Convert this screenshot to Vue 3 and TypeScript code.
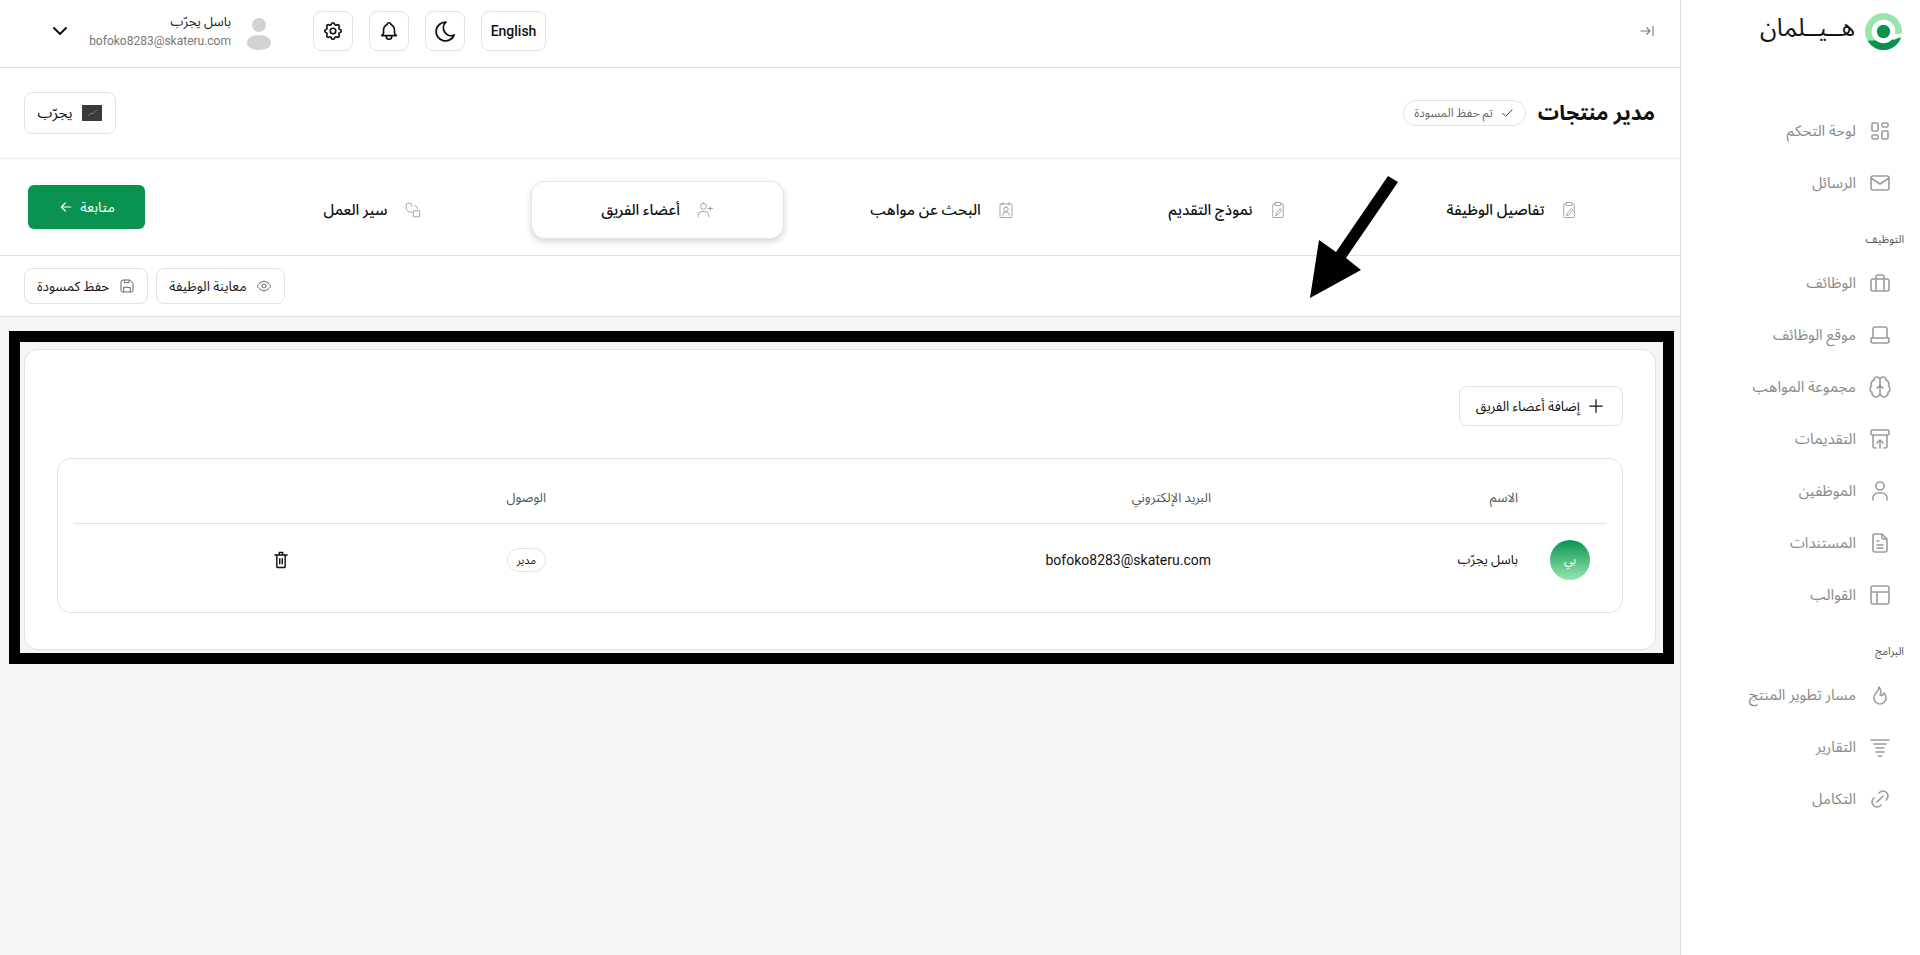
<script setup lang="ts">
// Team members step of the job wizard, with the review annotation on top.

interface NavItem {
  label: string
  icon: string
}

interface NavGroup {
  title?: string
  items: NavItem[]
}

interface Step {
  label: string
  icon: string
  active?: boolean
}

const navGroups: NavGroup[] = [
  {
    items: [
      { label: 'لوحة التحكم', icon: 'dashboard' },
      { label: 'الرسائل', icon: 'mail' },
    ],
  },
  {
    title: 'التوظيف',
    items: [
      { label: 'الوظائف', icon: 'briefcase' },
      { label: 'موقع الوظائف', icon: 'laptop' },
      { label: 'مجموعة المواهب', icon: 'brain' },
      { label: 'التقديمات', icon: 'archive' },
      { label: 'الموظفين', icon: 'user' },
      { label: 'المستندات', icon: 'file' },
      { label: 'القوالب', icon: 'template' },
    ],
  },
  {
    title: 'البرامج',
    items: [
      { label: 'مسار تطوير المنتج', icon: 'flame' },
      { label: 'التقارير', icon: 'filter' },
      { label: 'التكامل', icon: 'link' },
    ],
  },
]

const steps: Step[] = [
  { label: 'تفاصيل الوظيفة', icon: 'clip' },
  { label: 'نموذج التقديم', icon: 'clip' },
  { label: 'البحث عن مواهب', icon: 'badge' },
  { label: 'أعضاء الفريق', icon: 'userplus', active: true },
  { label: 'سير العمل', icon: 'flow' },
]

const icons: Record<string, string> = {
  dashboard:
    'M5 4h4a1 1 0 0 1 1 1v6a1 1 0 0 1-1 1H5a1 1 0 0 1-1-1V5a1 1 0 0 1 1-1zM5 16h4a1 1 0 0 1 1 1v2a1 1 0 0 1-1 1H5a1 1 0 0 1-1-1v-2a1 1 0 0 1 1-1zM15 12h4a1 1 0 0 1 1 1v6a1 1 0 0 1-1 1h-4a1 1 0 0 1-1-1v-6a1 1 0 0 1 1-1zM15 4h4a1 1 0 0 1 1 1v2a1 1 0 0 1-1 1h-4a1 1 0 0 1-1-1V5a1 1 0 0 1 1-1z',
  mail: 'M5 5h14a2 2 0 0 1 2 2v10a2 2 0 0 1-2 2H5a2 2 0 0 1-2-2V7a2 2 0 0 1 2-2zM3 7l9 6 9-6',
  briefcase:
    'M5 8h14a2 2 0 0 1 2 2v8a2 2 0 0 1-2 2H5a2 2 0 0 1-2-2v-8a2 2 0 0 1 2-2zM8 20V6a2 2 0 0 1 2-2h4a2 2 0 0 1 2 2v14',
  laptop:
    'M5 15V6a2 2 0 0 1 2-2h10a2 2 0 0 1 2 2v9M3 15h18v3a2 2 0 0 1-2 2H5a2 2 0 0 1-2-2z',
  brain:
    'M12 5a3 3 0 1 0-5.997.125 4 4 0 0 0-2.526 5.77 4 4 0 0 0 .556 6.588A4 4 0 1 0 12 18ZM12 5a3 3 0 1 1 5.997.125 4 4 0 0 1 2.526 5.77 4 4 0 0 1-.556 6.588A4 4 0 1 1 12 18ZM12 5v13M15 13a4.5 4.5 0 0 1-3-4 4.5 4.5 0 0 1-3 4',
  archive:
    'M4 3h16a1 1 0 0 1 1 1v3a1 1 0 0 1-1 1H4a1 1 0 0 1-1-1V4a1 1 0 0 1 1-1zM5 8v11a2 2 0 0 0 2 2h1M16 21h1a2 2 0 0 0 2-2V8M12 21v-8M9 16l3-3 3 3',
  user: 'M12 3a4 4 0 1 1 0 8 4 4 0 0 1 0-8zM5 21v-2a5 5 0 0 1 5-5h4a5 5 0 0 1 5 5v2',
  file: 'M14 3v4a1 1 0 0 0 1 1h4M17 21H7a2 2 0 0 1-2-2V5a2 2 0 0 1 2-2h7l5 5v11a2 2 0 0 1-2 2zM9 10h2M9 14h6M9 17h6',
  template: 'M5 3h14a2 2 0 0 1 2 2v14a2 2 0 0 1-2 2H5a2 2 0 0 1-2-2V5a2 2 0 0 1 2-2zM3 9h18M9 21V9',
  flame:
    'M12 12c2-2.96 0-7-1-8 0 3.038-1.773 4.741-3 6-1.226 1.26-2 3.24-2 5a6 6 0 1 0 12 0c0-1.532-1.056-3.94-2-5-1.786 3-2.791 3-4 2z',
  filter: 'M3 5h18M6 9h12M8 13h8M8 17h8M10.5 21h3',
  link: 'M9 15l6-6M11 6l.463-.536a5 5 0 0 1 7.071 7.072l-.534.464M13 18l-.397.534a5.068 5.068 0 0 1-7.127 0 4.972 4.972 0 0 1 0-7.071l.524-.463',
  clip: 'M8 4H6a1 1 0 0 0-1 1v16a1 1 0 0 0 1 1h12a1 1 0 0 0 1-1V5a1 1 0 0 0-1-1h-2M9 2h6a1 1 0 0 1 1 1v2a1 1 0 0 1-1 1H9a1 1 0 0 1-1-1V3a1 1 0 0 1 1-1zM9 19l1-3 5-6 2 2-5 6z',
  badge:
    'M5 4h14a1 1 0 0 1 1 1v16a1 1 0 0 1-1 1H5a1 1 0 0 1-1-1V5a1 1 0 0 1 1-1zM8 2v3M16 2v3M12 8a3 3 0 1 1 0 6 3 3 0 0 1 0-6zM7.5 19a4.500 4.500 0 0 1 9 0',
  userplus:
    'M10 3a4 4 0 1 1 0 8 4 4 0 0 1 0-8zM3 21v-2a5 5 0 0 1 5-5h4a5 5 0 0 1 5 5v2M19 7v6M16 10h6',
  flow: 'M13 13h8v8h-8zM11 15H9a6 6 0 0 1-6-6V5a2 2 0 0 1 2-2h3a2 2 0 0 1 2 2v2M14 6a5 5 0 0 1 4 4',
}
</script>

<template>
  <div class="page" dir="rtl">
    <aside class="sidebar">
      <div class="brand">
        <svg class="logo" viewBox="0 0 36 36" aria-hidden="true">
          <circle cx="18" cy="18" r="18" fill="#98e5ad" />
          <path d="M2.400 27A18 18 0 0 0 35.600 22L28 26z" fill="#0a9350" />
          <circle cx="18" cy="18" r="11.500" fill="#fff" />
          <path d="M27 21l9-1v3l-8 3z" fill="#fff" />
          <circle cx="18" cy="18" r="6.500" fill="#0a9350" />
        </svg>
        <span class="brand-name">هــيــلمان</span>
      </div>
      <nav class="nav">
        <div v-for="(group, g) in navGroups" :key="g" class="nav-group">
          <div v-if="group.title" class="nav-title">{{ group.title }}</div>
          <a v-for="item in group.items" :key="item.label" class="nav-item">
            <svg class="nav-icon" viewBox="0 0 24 24"><path :d="icons[item.icon]" /></svg>
            <span>{{ item.label }}</span>
          </a>
        </div>
      </nav>
    </aside>

    <main class="main">
      <header class="topbar">
        <svg class="collapse" viewBox="0 0 16 16"><path d="M14 3v10M1.500 8h9.500M7.500 4.500 11 8l-3.500 3.500" /></svg>
        <div class="top-actions">
          <button type="button" class="square lang">English</button>
          <button type="button" class="square">
            <svg class="top-icon moon" viewBox="0 0 24 24"><path d="M12 3h.393a7.500 7.500 0 0 0 7.920 12.446A9 9 0 1 1 12 3z" /></svg>
          </button>
          <button type="button" class="square">
            <svg class="top-icon" viewBox="0 0 24 24"><path d="M10 5a2 2 0 1 1 4 0 7 7 0 0 1 4 6v3a4 4 0 0 0 2 3H4a4 4 0 0 0 2-3v-3a7 7 0 0 1 4-6M9 17v1a3 3 0 0 0 6 0v-1" /></svg>
          </button>
          <button type="button" class="square">
            <svg class="top-icon" viewBox="0 0 24 24"><path d="M10.325 4.317c.426-1.756 2.924-1.756 3.350 0a1.724 1.724 0 0 0 2.573 1.066c1.543-.940 3.310.826 2.370 2.370a1.724 1.724 0 0 0 1.065 2.572c1.756.426 1.756 2.924 0 3.350a1.724 1.724 0 0 0-1.066 2.573c.940 1.543-.826 3.310-2.370 2.370a1.724 1.724 0 0 0-2.572 1.065c-.426 1.756-2.924 1.756-3.350 0a1.724 1.724 0 0 0-2.573-1.066c-1.543.940-3.310-.826-2.370-2.370a1.724 1.724 0 0 0-1.065-2.572c-1.756-.426-1.756-2.924 0-3.350a1.724 1.724 0 0 0 1.066-2.573c-.940-1.543.826-3.310 2.370-2.370 1 .608 2.296.070 2.572-1.065zM12 9a3 3 0 1 1 0 6 3 3 0 0 1 0-6z" /></svg>
          </button>
          <div class="profile">
            <svg class="silhouette" viewBox="0 0 24 32"><circle cx="12" cy="7" r="7" /><path d="M0 25c0-5 5-8 12-8s12 3 12 8c0 4-5 7-12 7S0 29 0 25z" /></svg>
            <div class="who">
              <div class="who-name">باسل يجرّب</div>
              <div class="who-mail" dir="ltr">bofoko8283@skateru.com</div>
            </div>
            <svg class="chevron" viewBox="0 0 24 24"><path d="M6 9l6 6 6-6" /></svg>
          </div>
        </div>
      </header>

      <section class="title-row">
        <div class="title-side">
          <h1>مدير منتجات</h1>
          <span class="saved">
            <svg viewBox="0 0 24 24"><path d="M5 12l5 5L20 7" /></svg>
            تم حفظ المسودة
          </span>
        </div>
        <button type="button" class="ghost try">
          <span class="thumb"><svg viewBox="0 0 20 16"><path d="M6 11l3-3 1 1 5-4" /></svg></span>
          يجرّب
        </button>
      </section>

      <section class="stepper">
        <div class="steps">
          <div v-for="step in steps" :key="step.label" class="step" :class="{ active: step.active }">
            <svg viewBox="0 0 24 24"><path :d="icons[step.icon]" /></svg>
            <span>{{ step.label }}</span>
          </div>
        </div>
        <button type="button" class="next">
          متابعة
          <svg viewBox="0 0 24 24"><path d="M19 12H5M11 6l-6 6 6 6" /></svg>
        </button>
      </section>

      <section class="actions">
        <button type="button" class="ghost small">
          <svg viewBox="0 0 24 24"><path d="M2 12s3.600-7 10-7 10 7 10 7-3.600 7-10 7-10-7-10-7zM12 9a3 3 0 1 1 0 6 3 3 0 0 1 0-6z" /></svg>
          معاينة الوظيفة
        </button>
        <button type="button" class="ghost small">
          <svg viewBox="0 0 24 24"><path d="M6 3h10l5 5v11a2 2 0 0 1-2 2H5a2 2 0 0 1-2-2V6a3 3 0 0 1 3-3zM7 21v-7h10v7M8 3v4h7V3" /></svg>
          حفظ كمسودة
        </button>
      </section>

      <div class="frame">
        <div class="card">
          <div class="card-head">
            <button type="button" class="ghost add">
              <svg viewBox="0 0 24 24"><path d="M12 4v16M4 12h16" /></svg>
              إضافة أعضاء الفريق
            </button>
          </div>
          <div class="table-box">
            <table>
              <thead>
                <tr>
                  <th class="c-avatar"></th>
                  <th class="c-name">الاسم</th>
                  <th class="c-mail">البريد الإلكتروني</th>
                  <th class="c-access">الوصول</th>
                  <th></th>
                </tr>
              </thead>
              <tbody>
                <tr>
                  <td class="c-avatar"><span class="avatar">بي</span></td>
                  <td class="c-name">باسل يجرّب</td>
                  <td class="c-mail">bofoko8283@skateru.com</td>
                  <td class="c-access"><span class="role">مدير</span></td>
                  <td class="c-del">
                    <svg viewBox="0 0 24 24"><path d="M4 6h16M10 6V3h4v3M7 6h10v14a1 1 0 0 1-1 1H8a1 1 0 0 1-1-1zM10.500 10v7M13.500 10v7" /></svg>
                  </td>
                </tr>
              </tbody>
            </table>
          </div>
        </div>
      </div>

      <!-- review annotation drawn over the page -->
      <svg class="arrow" viewBox="0 0 91 124">
        <polygon points="79,1 89,7 37,83 52,95 1,123 10,65 27,77" />
      </svg>
    </main>
  </div>
</template>

<style scoped>
.page {
  display: flex;
  min-height: 955px;
  font-family: Roboto, 'Noto Sans', 'Noto Sans Arabic', 'DejaVu Sans', sans-serif;
  color: #111;
}

.sidebar {
  flex: 0 0 240px;
  box-sizing: border-box;
  background: #fff;
  border-left: 1px solid #e0e0e0;
  padding: 13px 16px 0 0;
}

.brand {
  display: flex;
  align-items: center;
  gap: 10px;
  height: 36px;
  padding-right: 2px;
}

.logo {
  width: 37px;
  height: 37px;
}

.brand-name {
  margin-bottom: 6px;
  font-size: 24.500px;
  line-height: 36px;
  color: #151515;
}

.nav {
  margin-top: 56px;
}

.nav-group + .nav-group {
  margin-top: 13px;
}

.nav-title {
  font-size: 11px;
  line-height: 35px;
  color: #555;
}

.nav-item {
  display: flex;
  align-items: center;
  gap: 12px;
  height: 52px;
  padding-right: 12px;
  font-size: 15px;
  color: #8a8a8a;
}

.nav-icon {
  flex: none;
  width: 24px;
  height: 24px;
  fill: none;
  stroke: #9c9c9c;
  stroke-width: 1.600;
  stroke-linecap: round;
  stroke-linejoin: round;
}

.main {
  position: relative;
  flex: 1;
  min-width: 0;
  background: #f5f5f5;
}

.topbar {
  display: flex;
  justify-content: space-between;
  align-items: center;
  box-sizing: border-box;
  height: 68px;
  padding: 0 25px 5px 48px;
  background: #fff;
  border-bottom: 1px solid #e0e0e0;
}

.collapse {
  width: 16px;
  height: 16px;
  fill: none;
  stroke: #777;
  stroke-width: 1.100;
}

.top-actions {
  display: flex;
  align-items: center;
  gap: 16px;
}

.square {
  display: flex;
  align-items: center;
  justify-content: center;
  width: 40px;
  height: 40px;
  padding: 0;
  background: #fff;
  border: 1px solid #e2e2e2;
  border-radius: 8px;
  font: inherit;
  color: #111;
}

.lang {
  width: 65px;
  font-size: 14px;
  font-weight: 500;
}

.top-icon {
  width: 22px;
  height: 22px;
  fill: none;
  stroke: #111;
  stroke-width: 1.800;
  stroke-linecap: round;
  stroke-linejoin: round;
}

.moon {
  width: 25px;
  height: 25px;
}

.profile {
  display: flex;
  align-items: center;
  margin-right: 18px;
}

.silhouette {
  width: 24px;
  height: 32px;
  margin: 6px 8px 0 16px;
  fill: #d2d2d2;
}

.who {
  width: 143px;
}

.who-name {
  font-size: 13px;
  line-height: 20px;
  color: #222;
}

.who-mail {
  font-size: 12px;
  line-height: 18px;
  text-align: right;
  color: #777;
}

.chevron {
  width: 24px;
  height: 24px;
  margin-right: 16px;
  fill: none;
  stroke: #111;
  stroke-width: 2;
  stroke-linecap: round;
  stroke-linejoin: round;
}

.title-row {
  display: flex;
  justify-content: space-between;
  align-items: center;
  box-sizing: border-box;
  height: 91px;
  padding: 0 25px 0 24px;
  background: #fff;
  border-bottom: 1px solid #ececec;
}

.title-side {
  display: flex;
  align-items: center;
  gap: 12px;
}

h1 {
  margin: 0;
  font-size: 21px;
  line-height: 32px;
  font-weight: 700;
}

.saved {
  display: flex;
  align-items: center;
  gap: 6px;
  height: 24px;
  padding: 0 10px;
  border: 1px solid #e2e2e2;
  border-radius: 13px;
  font-size: 12px;
  color: #666;
}

.saved svg {
  width: 16px;
  height: 16px;
  fill: none;
  stroke: #444;
  stroke-width: 1.500;
}

.ghost {
  display: flex;
  align-items: center;
  background: #fff;
  border: 1px solid #e2e2e2;
  border-radius: 8px;
  font: inherit;
  color: #111;
}

.try {
  gap: 10px;
  width: 92px;
  height: 42px;
  justify-content: center;
  padding: 0;
  font-size: 15px;
}

.thumb {
  display: block;
  width: 20px;
  height: 16px;
  background: #3a3a3a;
}

.thumb svg {
  display: block;
  fill: none;
  stroke: #777;
}

.stepper {
  display: flex;
  justify-content: space-between;
  align-items: center;
  box-sizing: border-box;
  height: 97px;
  padding: 0 41px 0 28px;
  background: #fff;
  border-bottom: 1px solid #e0e0e0;
}

.steps {
  display: flex;
  gap: 32px;
  margin-top: 6px;
}

.step {
  display: flex;
  align-items: center;
  justify-content: center;
  gap: 16px;
  box-sizing: border-box;
  width: 253px;
  height: 58px;
  font-size: 15px;
  font-weight: 500;
  border: 1px solid transparent;
  border-radius: 14px;
}

.step svg {
  flex: none;
  width: 18px;
  height: 18px;
  fill: none;
  stroke: #888;
  stroke-width: 1;
  stroke-linecap: round;
  stroke-linejoin: round;
}

.step.active {
  background: #fff;
  border-color: #e6e6e6;
  box-shadow: 0 3px 6px rgba(0, 0, 0, 0.16);
}

.next {
  display: flex;
  align-items: center;
  justify-content: center;
  gap: 6px;
  width: 117px;
  height: 44px;
  background: #0a9350;
  border: 0;
  border-radius: 6px;
  font: inherit;
  font-size: 14px;
  color: #fff;
}

.next svg {
  width: 16px;
  height: 16px;
  fill: none;
  stroke: #fff;
  stroke-width: 1.800;
  stroke-linecap: round;
  stroke-linejoin: round;
}

.actions {
  display: flex;
  justify-content: flex-end;
  align-items: center;
  gap: 8px;
  box-sizing: border-box;
  height: 61px;
  padding: 0 24px;
  background: #fff;
  border-bottom: 1px solid #e0e0e0;
}

.small {
  gap: 10px;
  height: 36px;
  padding: 0 12px;
  font-size: 13.500px;
}

.small svg {
  width: 16px;
  height: 16px;
  fill: none;
  stroke: #666;
  stroke-width: 1.500;
  stroke-linejoin: round;
}

.frame {
  margin: 14px 6px 0 9px;
  padding: 7px 7px 3px 4px;
  background: #f5f5f5;
  border: 11px solid #000;
}

.card {
  box-sizing: border-box;
  height: 301px;
  padding: 36px 32px 0 32px;
  background: #fff;
  border: 1px solid #e2e2e2;
  border-radius: 14px;
}

.card-head {
  display: flex;
  margin-bottom: 32px;
}

.add {
  gap: 6px;
  height: 40px;
  padding: 0 16px;
  font-size: 13.500px;
}

.add svg {
  width: 20px;
  height: 20px;
  fill: none;
  stroke: #111;
  stroke-width: 1.500;
}

.table-box {
  padding: 0 16px;
  height: 155px;
  box-sizing: border-box;
  border: 1px solid #e2e2e2;
  border-radius: 14px;
}

table {
  width: 100%;
  border-collapse: collapse;
  table-layout: fixed;
}

th {
  height: 50px;
  padding: 14px 0 0;
  border-bottom: 1px solid #e2e2e2;
  font-size: 13px;
  font-weight: 400;
  color: #555;
  text-align: right;
}

td {
  height: 72px;
  padding: 0;
  font-size: 14px;
  text-align: right;
}

td.c-name {
  font-size: 13px;
}

.c-avatar {
  width: 88px;
}

.c-name {
  width: 307px;
}

.c-mail {
  width: 665px;
}

.c-access {
  width: 230px;
}

.c-del svg {
  display: block;
  width: 20px;
  height: 20px;
  margin-right: 25px;
  fill: none;
  stroke: #111;
  stroke-width: 1.700;
}

.avatar {
  display: flex;
  align-items: center;
  justify-content: center;
  width: 40px;
  height: 40px;
  margin-right: 16px;
  border-radius: 50%;
  background: linear-gradient(#0a9350, #98e5ad);
  font-size: 12px;
  color: #fff;
}

.role {
  display: inline-flex;
  align-items: center;
  height: 22px;
  padding: 0 9px;
  border: 1px solid #e2e2e2;
  border-radius: 12px;
  font-size: 11px;
}

.arrow {
  position: absolute;
  left: 1309px;
  top: 175px;
  width: 91px;
  height: 124px;
  fill: #000;
}
</style>

<style>
body {
  background: #f5f5f5;
}
</style>
